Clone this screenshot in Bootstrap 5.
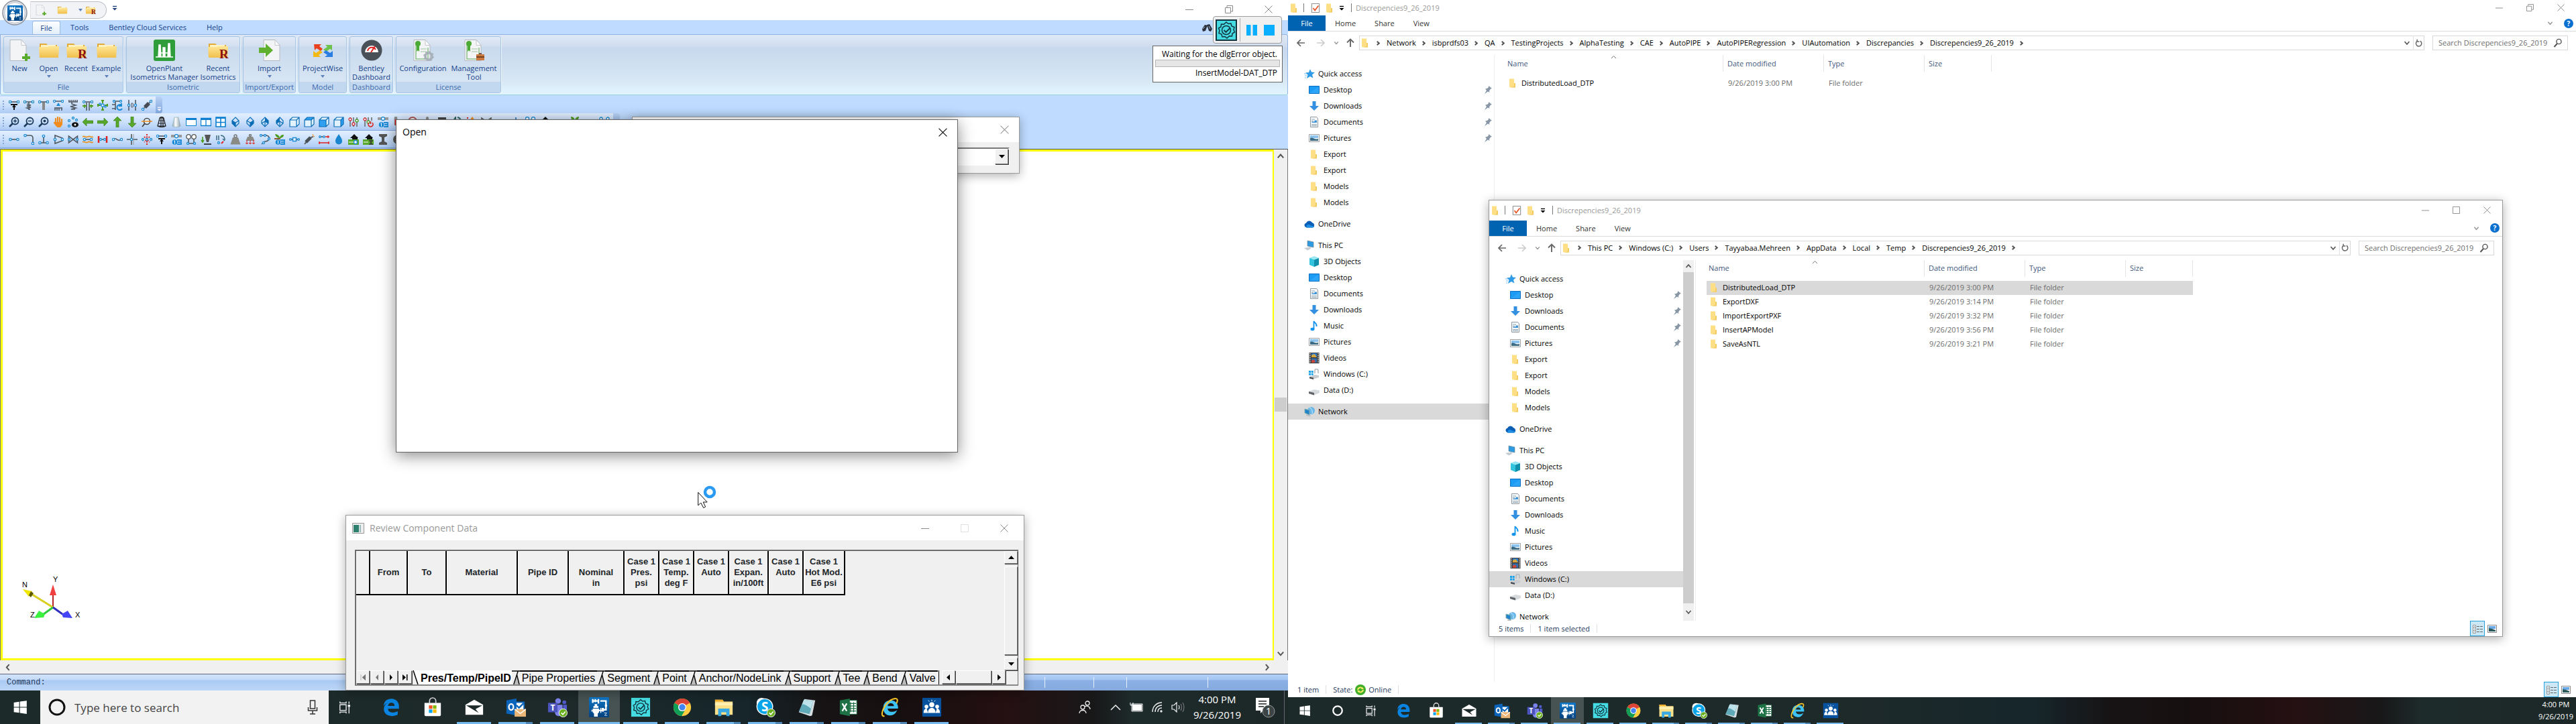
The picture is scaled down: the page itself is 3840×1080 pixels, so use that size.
<!DOCTYPE html>
<html lang="en">
<head>
<meta charset="utf-8">
<meta name="viewport" content="width=device-width, initial-scale=1">
<title>AutoPIPE</title>
<link href="https://cdn.jsdelivr.net/npm/bootstrap@5.3.0/dist/css/bootstrap.min.css" rel="stylesheet">
<style>
body{font-family:"Open Sans","Noto Sans",sans-serif;font-size:11px;line-height:16px;color:#000;background:#fff;overflow:hidden}
button{background:none;border:0;padding:0;color:inherit;font:inherit}
a{color:inherit;text-decoration:none}
svg{display:block;flex:none}
.desk{height:100vh}
.monitor{flex:1 1 0;min-width:0}
.i16{width:16px;height:16px}
.i32{width:32px;height:32px}
.nd{fill:#fff;stroke:#1a8ad6;stroke-width:1.3}
.gl{fill:none;stroke:#505860;stroke-width:1.6}
.bl{fill:none;stroke:#0a6db5;stroke-width:1.2}

/* AutoPIPE main window */
.app-title{height:30px;background:#fff}
.orb{left:3px;top:0;z-index:3}
.quick{width:114px;height:26px;margin-left:45px;margin-top:2px;padding-left:7px;border:1px solid #b9bec7;border-left-color:#dde0e6;border-radius:0 13px 13px 0;background:#f1f3f7}
.wbtn{width:59px;height:28px;color:#8a8a8a}
.tabstrip{height:21px;background:#bfdbff;padding-left:48px;color:#15428b}
.tabstrip a{height:21px;line-height:22px;padding:0 15px}
.tabstrip a.on{width:42px;padding:0;text-align:center;margin-top:1px;height:20px;line-height:20px;background:linear-gradient(#fdfeff,#e3eefa);border:1px solid #9cbce6;border-bottom:0;border-radius:3px 3px 0 0}
.tabstrip .find-cmd{margin-right:113px}
.ribbon{height:91px;padding:2px 4px 0;gap:4px;border:1px solid #8db2e3;border-bottom-color:#9ad3dd;border-radius:0 3px 3px 3px;background:linear-gradient(#dfe8f5,#cfdcee 18px,#c7d8ee 19px,#d6e6f3 65px,#e2f5ff)}
.rgroup{height:85px;border:1px solid #a5c3e2;border-radius:3px;box-shadow:1px 1px 0 #eef6fd;background:linear-gradient(#e1eaf6,#d3dfef 14px,#c9daee 15px,#dce9f5)}
.rgroup .rlabel{height:16px;line-height:16px;background:#c1d8f0;color:#3e6aaa;text-align:center;border-radius:0 0 3px 3px}
.rbtn{color:#15428b;line-height:13px;padding-top:4px;display:flex;flex-direction:column;align-items:center}
.rbtn svg.i32{margin-bottom:4px}
.w41{width:41px}.w46{width:46px}.w49{width:49px}.w56{width:56px}.w65{width:65px}.w72{width:72px}.w76{width:76px}.w79{width:79px}.w104{width:104px}.w157{width:157px}
.tools{height:80px;background:#bfdbff}
.tbar{width:max-content;height:26px;padding-left:10px;background:linear-gradient(#e3efff,#c9dffb 55%,#aecbf4);border-bottom:1px solid #7fa6dd;border-radius:0 4px 4px 0;position:relative}
.tbar.first{margin-top:2px;height:25px;border-bottom:0}
.tbar::before{content:"";position:absolute;left:4px;top:6px;bottom:5px;border-left:2px dotted #86a7d6}
.tbar button{width:22px;height:25px;display:flex;align-items:center;justify-content:center}
.tbar button svg{width:16px;height:16px}
.tbar .more{width:10px;background:linear-gradient(#b9d2f6,#7fa5dc);color:#fff;border-radius:0 4px 4px 0;margin-left:2px;align-items:flex-end;padding-bottom:3px}
.tbar .more svg{width:7px;height:7px}
.view{border-top:1px solid #555;border-left:1px solid #777}
.draw{border:3px solid #ff0;border-right-width:2px;background:#fff}
.sbar{width:21px;background:#f0f0f0;border-right:1px solid #777}
.thumb{width:18px;height:21px;background:#cdcdcd;margin-top:354px}
.hbar{height:21px;background:#f0f0f0;border-bottom:1px solid #5c6a80;padding:0 26px 0 6px}
.status{height:24px;padding-left:10px;background:linear-gradient(#d3e4fb,#c2d9f8 35%,#a9c9f3 36%,#bdd6f7);font-family:"Liberation Mono",monospace;font-size:12px;color:#1e395b}
.stat-r{width:450px;background:linear-gradient(#b4d0f7,#a2c3f2 35%,#8bb0e6 36%,#86aadd)}
.stat-r i{height:16px;border-right:1px solid #e6f0fc}

/* floating windows */
.win{position:absolute;background:#fff;border:1px solid #9a9a9a;box-shadow:0 3px 14px rgba(0,0,0,.32)}
.win-open{left:590px;top:178px;width:838px;height:497px;z-index:5;border-color:#666;box-shadow:0 5px 22px rgba(0,0,0,.45)}
.win-open header{height:36px;padding:0 15px 0 9px;font-size:14px}
.win-combo{left:942px;top:174px;width:578px;height:85px;z-index:4;background:#f0f0f0}
.win-combo header{height:37px;background:#fff;padding-right:15px;color:#999}
.combo{height:27px;margin:8px 14px 0 20px;border:2px solid;border-color:#777 #fff #fff #777;background:#fff}
.combo select{appearance:none;border:0;background:#fff;outline:0}
.raised{background:#f0f0f0;border:1px solid;border-color:#fff #777 #777 #fff;box-shadow:1px 1px 0 #444;display:flex;align-items:center;justify-content:center}
.combo .raised{width:20px}
.win-review{left:515px;top:768px;width:1012px;height:262px;z-index:4;background:#f0f0f0}
.win-review header{height:37px;background:#fff;padding-left:9px;font-size:14px;color:#999}
.wbtn:disabled{color:#e0e0e0}
.sheet{margin:14px 8px 0 13px;height:203px;border:2px solid #6d6d6d;border-right-width:1px;border-bottom-color:#888}
.grid{table-layout:fixed;width:729px!important;border-collapse:separate;border-spacing:0}
.grid th{font:bold 13px/16px "Liberation Sans",sans-serif;height:66px;text-align:center;vertical-align:top;padding:8px 0 0;border:1px solid #000;border-width:0 2px 2px 0;box-shadow:inset 1px 1px 0 #fff;background:#f0f0f0;white-space:nowrap}
.c21{width:21px}.c52{width:52px}.c56{width:56px}.c58{width:58px}.c59{width:59px}.c62{width:62px}.c76{width:76px}.c83{width:83px}.c106{width:106px}
.vs{width:20px}
.h19{height:19px}
.sheettabs{height:21px;font:16px/20px "Liberation Sans",sans-serif}
.sheettabs .raised{width:20px;height:20px;margin-right:1px;flex:none}
.sheettabs .raised.long{width:53px}
.sheettabs .tabs{width:785px;flex:none;overflow:hidden;border-right:1px solid #000}
.sheettabs .tabs button{border-top:2px solid #000;height:21px;line-height:18px;white-space:nowrap;padding:0 3px}
.sheettabs .tabs button.on{background:#fff;border-top-color:#fff;font-weight:bold;padding:0 1px 0 0}
.sheettabs .tabs svg{width:12px;height:21px}

/* test run indicator */
.runner{left:1808px;top:24px;width:103px;height:41px;z-index:6;background:#f0f0f0;border:1px solid #9d9d9d;border-radius:4px;padding:3px}
.runner .sep{width:1px;height:35px;background:#aaa;margin:0 9px 0 4px}
.bubble{left:1718px;top:68px;width:194px;height:55px;z-index:6;background:#fff;border:1px solid #666;padding:4px 3px;font-size:12px}
.bubble p{margin:0 4px;text-align:right;line-height:16px;white-space:nowrap}
.bubble .bar{height:11px;border:1px solid #b5b5b5;background:#e6e6e6;margin-bottom:1px}

/* Explorer */
.explorer{background:#fff}
.ex-title{height:23px;padding-left:1px;color:#999;gap:6px}
.ex-title .vr1{width:1px;height:13px;background:#777}
.ex-title button{width:46px;height:20px;display:flex;align-items:center;justify-content:center;color:#888}
.ex-tabs{height:24px;border-bottom:1px solid #dadbdc;color:#333}
.ex-tabs a{line-height:23px;height:23px;padding:0 14px}
.ex-tabs a.file{background:#0063b1;color:#fff;width:56px;padding:0;text-align:center}
.ex-addr{height:35px;padding:6px 12px 7px 4px}
.ex-addr .crumbs{border:1px solid #d9d9d9;height:22px;margin-right:12px;min-width:0}
.ex-addr .crumbs a{white-space:nowrap}
.chev{width:24px;display:flex;justify-content:center}
.chev::before{content:"";width:5px;height:5px;border:solid #555;border-width:2px 2px 0 0;transform:rotate(45deg);margin-right:3px}
.ex-addr .find{width:202px;height:22px;border:1px solid #d9d9d9;padding:0 7px 0 8px}
.find input{border:0;outline:0;padding:0;width:170px;min-width:0;color:#6d6d6d;background:none}
.find input::placeholder{color:#6d6d6d;opacity:1}
.navb{width:30px;height:22px;display:flex;align-items:center;justify-content:center;color:#666}
.navb.off{color:#ccc}
.navb.sm{width:16px;color:#888}
.navb.upb{width:26px}
.tree{width:308px;border-right:1px solid #eee}
.tree .rows{padding-top:16px;overflow:hidden}
.tree a{display:flex;align-items:center;height:24px;padding:0 2px 0 31px;gap:6px;flex:none}
.tree a.top{padding-left:24px;gap:5px}
.tree a.gap{margin-top:8px}
.tree a.sel{background:#d9d9d9}
.tree a svg.pin{margin-left:auto;width:14px;height:14px}
.tree .scroll{width:16px;background:#f0f0f0;margin-right:2px}
.tree .scroll i{background:#cdcdcd}
.files{table-layout:fixed;width:725px!important;margin-left:16px;border-collapse:separate;border-spacing:0}
.c325{width:325px}.c150{width:150px}.c100{width:100px}
.files th{height:25px;padding:0 0 0 6px;font-weight:400;color:#43597d;border-right:1px solid #e5e5e5!important;vertical-align:middle;position:relative}
.files th:first-child{padding-left:3px}
.files td{height:21px;padding:0 0 0 7px;color:#6d6d6d;vertical-align:middle;background:none}
.files td:first-child{padding-left:3px;color:#000}
.files td svg{margin-right:5px}
.files tbody::before{content:"";display:block;height:6px}
.files tr.sel td{background:#d9d9d9}
.files .sort{position:absolute;left:157px;top:0}
.ex-status{height:23px;padding-left:14px;color:#1e395b}
.ex-status .vr1{width:1px;height:13px;background:#e0e0e0;margin:0 10px}
.vbtn{width:22px;height:23px;display:flex;align-items:center;justify-content:center}
.vbtn.on{border:1px solid #26a0da;background:#cce8f6}
.win-ex{left:299px;top:298px;width:1512px;height:652px;z-index:3}
.win-ex .ex-title{height:30px}

/* task bars */
.task{background:linear-gradient(90deg,#1c2a2a 0,#1e2a2a 44%,#16262b 58%,#171314 64%,#160f10 70%,#251012 78%,#181819 85%,#1e2b2b 88%,#1c2827);color:#fff}
.task.big{height:50px}
.task.small2{height:40px}
.task .t{width:62px;height:100%;display:flex;align-items:center;justify-content:center;position:relative}
.task .t.start{width:60px}
.task.small2 .t{width:49px}
.task .t svg{width:30px;height:30px}
.task .t svg.tview{width:27px;margin-right:16px}
.task.small2 .t svg{width:24px;height:24px}
.task .t.run::after{content:"";position:absolute;bottom:0;left:5px;right:6px;height:3px;background:#76b9ed}
.task.small2 .t.run::after{height:2px;left:4px;right:5px}
.task .t.multi::after{background:linear-gradient(90deg,#76b9ed 80%,#4f86b4 80%)}
.task .t.act{background:#465352}
.task .t.act::after{left:0;right:0}
.search{width:430px;background:#f2f2f2;color:#444;padding:0 16px 0 12px;gap:13px}
.search input{border:0;outline:0;background:none;font-size:17px;padding:0;color:#444}
.search input::placeholder{color:#444;opacity:1}
.tray{gap:13px}
.peek{width:6px;height:50px;border-left:1px solid #667}
.clock{text-align:center;font-size:15px;line-height:23px}
.task.small2 .clock{font-size:11px;line-height:18px}
.pointer{left:1040px;top:724px;z-index:6;pointer-events:none}
</style>
</head>
<body>
<svg width="0" height="0" class="position-absolute" aria-hidden="true">
<defs>
<linearGradient id="gFold" x1="0" y1="0" x2="0" y2="1"><stop offset="0" stop-color="#ffe695"/><stop offset="1" stop-color="#f0bf4c"/></linearGradient>
<linearGradient id="gBlue" x1="0" y1="0" x2="0" y2="1"><stop offset="0" stop-color="#0f76c6"/><stop offset="1" stop-color="#02407c"/></linearGradient>
<linearGradient id="gCone" x1="0" x2="1"><stop offset="0" stop-color="#8fa3b0"/><stop offset=".4" stop-color="#fff"/><stop offset="1" stop-color="#8a9daa"/></linearGradient>
<symbol id="x" viewBox="0 0 12 12"><path d="M.5.5l11 11M11.500.5l-11 11" stroke="currentColor" fill="none"/></symbol>
<symbol id="mn" viewBox="0 0 12 12"><path d="M0 6.500h12" stroke="currentColor"/></symbol>
<symbol id="rs" viewBox="0 0 12 12"><path d="M.5 3.500h8v8h-8zM3 3V.5h8.500v8.500H9" stroke="currentColor" fill="none"/></symbol>
<symbol id="mx" viewBox="0 0 12 12"><path d="M.5.5h11v11H.5z" stroke="currentColor" fill="none"/></symbol>
<symbol id="up" viewBox="0 0 10 10"><path d="M1.500 7L5 3l3.500 4" stroke="#555" stroke-width="1.800" fill="none"/></symbol>
<symbol id="dn" viewBox="0 0 10 10"><path d="M1.500 3L5 7l3.500-4" stroke="currentColor" stroke-width="1.600" fill="none"/></symbol>
<symbol id="lf" viewBox="0 0 10 10"><path d="M7 1L3.500 5 7 9" stroke="#555" stroke-width="1.800" fill="none"/></symbol>
<symbol id="rt" viewBox="0 0 10 10"><path d="M3.500 1L7 5 3.500 9" stroke="#555" stroke-width="1.800" fill="none"/></symbol>
<symbol id="car" viewBox="0 0 6 4"><path d="M0 0h6L3 4z" fill="#5b7fb8"/></symbol>
<symbol id="sl" viewBox="0 0 13 21" preserveAspectRatio="none"><path d="M8 6l4 15H4z" fill="#bbb"/><path d="M0 1h13M10 1L3 21M8 6l4 15" fill="none" stroke="#000" stroke-width="1.500"/></symbol>
<symbol id="f" viewBox="0 0 16 16"><path d="M3 1.500h7V8h2v6.500H5L3 14z" fill="#ffdf86"/><path d="M10 8h2v6.500H5l5-1.500z" fill="#f4ca63"/></symbol>
<symbol id="fold" viewBox="0 0 32 32"><path d="M2 6h10l2 2h14v6H2z" fill="#e2ab38"/><path d="M4 8h22v6H4z" fill="#fff3c4"/><path d="M1 11h13l2-1h15v3l-1 14H2z" fill="url(#gFold)"/></symbol>
<symbol id="foldR" viewBox="0 0 32 32"><use href="#fold"/><text x="18" y="28" font-family="Liberation Serif,serif" font-weight="bold" font-size="19" fill="#8b1010">R</text></symbol>
<symbol id="page" viewBox="0 0 32 32"><path d="M2 .5h17l7 8v23H2z" fill="#f3f4f6" stroke="#b4b9c0"/><path d="M19 .5v8h7z" fill="#fff" stroke="#c2c6cc"/></symbol>
<symbol id="lic" viewBox="0 0 32 32"><use href="#page"/><path d="M5 4v25h18V12" stroke="#8cc08a" fill="none" stroke-width="1.500"/><circle cx="8" cy="6" r="4" fill="#4bab35"/><path d="M6 8h4v10l-2-2-2 2z" fill="#4bab35"/><path d="M12 14h9M12 18h9" stroke="#9fc79f"/></symbol>
<symbol id="new" viewBox="0 0 32 32"><use href="#page"/><path d="M24 21h4v4h4v4h-4v3h-4v-3h-4v-4h4z" fill="#58ab2b"/></symbol>
<symbol id="star" viewBox="0 0 16 16"><path d="M9 1l2 4.500 5 .5-4 3.500 1.500 5L9 12l-5 3 1.500-5.500L2 6.500 7 6z" fill="#2f9ae5"/><path d="M0 8h4M1 11h3M1 14h2" stroke="#7cc2f2"/></symbol>
<symbol id="desk" viewBox="0 0 16 16"><path d="M.5 2.500h15v11H.5z" fill="#1b9bf3" stroke="#0a6fc2"/><path d="M1 13L15 3v10z" fill="#3db0ff" opacity=".5"/></symbol>
<symbol id="down" viewBox="0 0 16 16"><path d="M5.500 1h5v7H15l-7 7-7-7h4.500z" fill="#3490e0"/></symbol>
<symbol id="doc" viewBox="0 0 16 16"><path d="M2.500.5h9l2 2.500v12.500h-11z" fill="#f8fafb" stroke="#8f989f"/><path d="M4 4h5M4 6.500h3M4 11.500h8M4 13.500h8" stroke="#8ca2b2"/><path d="M8.500 5.500H12V9H4.500V7.500h4z" fill="#3c93d8"/></symbol>
<symbol id="pic" viewBox="0 0 16 16"><path d="M.5 2.500h15v11H.5z" fill="#fff" stroke="#9aa0a6"/><path d="M2 4h12v4H2z" fill="#8cc3ee"/><path d="M2 8c4-2 7 3 12 1v3H2z" fill="#3c6c84"/></symbol>
<symbol id="cloud" viewBox="0 0 16 16"><path d="M3.500 13.500a3.500 3.500 0 0 1-.5-6.800A5 5 0 0 1 12 6a4 4 0 0 1 1 7.500z" fill="#0a5fb4"/><path d="M4 13.500c-2-3 2-6 5-3.500l6 2c-1 1.500-1.500 1.500-3 1.500z" fill="#1f8fe6"/></symbol>
<symbol id="pc" viewBox="0 0 16 16"><path d="M5 1l9 2v8L5 9z" fill="#2e9ae0" stroke="#6d7d88" stroke-width=".6"/><path d="M8 10l3 1-2 2-4-1zM0 12l5-1 5 2-5 2.500z" fill="#c5ccd2"/></symbol>
<symbol id="cube3" viewBox="0 0 16 16"><path d="M1 3l7-2.500L15 3v10l-7 3-7-3z" fill="#33c3dc"/><path d="M8 5.500L15 3v10l-7 3z" fill="#128fac"/><path d="M1 3l7-2.500L15 3 8 5.500z" fill="#9be8f2"/></symbol>
<symbol id="mus" viewBox="0 0 16 16"><ellipse cx="5.500" cy="13" rx="3" ry="2.300" fill="#1193ee"/><path d="M7.500 13V1c1 3 5 3.500 4 8" stroke="#1193ee" stroke-width="1.800" fill="none"/></symbol>
<symbol id="vid" viewBox="0 0 16 16"><path d="M.5 0h15v16H.5z" fill="#3a3a3a"/><path d="M4 1h8v6H4z" fill="#2f7fd0"/><path d="M4 8.500h8v6.500H4z" fill="#336fae"/><path d="M4 4l4-2 2 2 2 3H4z" fill="#d8a53a"/><path d="M4 12l3-2 3 3-2 2H4z" fill="#c8463a"/><path d="M2 1v14M14 1v14" stroke="#fff" stroke-dasharray="1.500 1.500" stroke-width="1.300"/></symbol>
<symbol id="drvw" viewBox="0 0 16 16"><path d="M0 3h3v3H0zM3.700 3h3v3h-3zM0 6.700h3v3H0zM3.700 6.700h3v3h-3z" fill="#1ba1e8"/><path d="M9 7V3a2.500 2.500 0 0 1 5 0v4" fill="none" stroke="#b3bac0" stroke-width="1.600"/><path d="M1 12l8-3 6 1v3l-8 2.500-6-1.500z" fill="#c9cdd1"/><path d="M1 12l6 1.500V16l-6-1.500z" fill="#4b4f52"/></symbol>
<symbol id="drv" viewBox="0 0 16 16"><path d="M0 10l8-3 8 1.500V12l-8 3.500L0 13z" fill="#d7dadd"/><path d="M0 10l8 2v3.500L0 13z" fill="#606468"/></symbol>
<symbol id="net" viewBox="0 0 16 16"><circle cx="10.500" cy="6.500" r="5.500" fill="#68b7e8"/><path d="M8 2c3 1 5 5 4 9" stroke="#d7f0ff" fill="none"/><path d="M1 4l7 2v7L1 10z" fill="#1f86cc" stroke="#8aa"/><path d="M4 12l6 2-1 1.500-6-1.500z" fill="#b5bcc2"/></symbol>
<symbol id="pin" viewBox="0 0 14 14"><path d="M8 1l5 4-2 .5-2 3 .5 2.500L7 9.500 2 13l3-5L3 5.500l3-.5 2-2z" fill="#8796a5"/></symbol>
<symbol id="chk" viewBox="0 0 16 16"><path d="M1.500.5h13v15h-13z" fill="#fff" stroke="#777"/><path d="M4 8l3 4 6-8" stroke="#e8572a" stroke-width="2" fill="none"/></symbol>
<symbol id="qd" viewBox="0 0 8 8"><path d="M1 1.500h6" stroke="currentColor" stroke-width="1.400"/><path d="M.5 4h7L4 7.500z" fill="currentColor"/></symbol>
<symbol id="al" viewBox="0 0 14 14"><path d="M7 2L2 7l5 5M2 7h11" stroke="currentColor" stroke-width="1.700" fill="none"/></symbol>
<symbol id="au" viewBox="0 0 14 14"><path d="M2 6.500L7 1.500l5 5M7 2v11" stroke="#666" stroke-width="1.900" fill="none"/></symbol>
<symbol id="ar" viewBox="0 0 14 14"><path d="M7 2l5 5-5 5M12 7H1" stroke="currentColor" stroke-width="1.700" fill="none"/></symbol>
<symbol id="rf" viewBox="0 0 14 14"><path d="M9.500 3.500a4.500 4.500 0 1 1-5 .2M4.500.8v3.400h3.500" stroke="#666" stroke-width="1.600" fill="none"/></symbol>
<symbol id="mg" viewBox="0 0 14 14"><circle cx="8.500" cy="5" r="3.600" stroke="#555" stroke-width="1.400" fill="none"/><path d="M6 8l-4.500 5" stroke="#555" stroke-width="2"/></symbol>
<symbol id="hp" viewBox="0 0 14 14"><circle cx="7" cy="7" r="7" fill="#0a70cf"/><text x="7" y="10.500" font-size="10" font-weight="bold" text-anchor="middle" fill="#fff">?</text></symbol>
<symbol id="dets" viewBox="0 0 16 16"><path d="M1.500 2.500h4v4h-4zM1.500 6.500h4v4h-4zM1.500 10.500h4v4h-4z" fill="#fff" stroke="#999"/><path d="M3 4.500h1M3 8.500h1M3 12.500h1" stroke="#2b7bd0"/><path d="M7 4.500h4M12 4.500h4M7 8.500h4M12 8.500h4M7 12.500h4M12 12.500h4" stroke="#666"/></symbol>
<symbol id="bigs" viewBox="0 0 14 14"><path d="M.5 1.500h13v11H.5z" fill="#fff" stroke="#888"/><path d="M2 3h10v4H2z" fill="#6aa8e8"/><path d="M2 6l5 1 5 2v2H2z" fill="#2c5a5c"/></symbol>
<!-- pipe tool icons used more than once -->
<symbol id="anc" viewBox="0 0 16 16"><path class="gl" d="M2 3h12"/><circle class="nd" cx="2" cy="3" r="1.700"/><circle class="nd" cx="14" cy="3" r="1.700"/><path d="M3 7h10M8 8v7" stroke="#111" stroke-width="2"/><path d="M8 7l3 4H5z" fill="#111"/></symbol>
<symbol id="pid" viewBox="0 0 16 16"><path d="M0 3h16" stroke="#999" stroke-width="4"/><circle class="nd" cx="8" cy="3" r="2.500"/><circle cx="5.500" cy="12" r="3.800" fill="#1a8ad6"/><path d="M5.500 9.500v5M4.500 10.500h1" stroke="#fff"/><path d="M9 9h6v6H9M10 12h4" stroke="#1a8ad6" stroke-width="1.800" fill="none"/></symbol>
<symbol id="lens" viewBox="0 0 16 16"><circle cx="9.500" cy="6.500" r="5" fill="none" stroke="#1c3a5c" stroke-width="1.800"/><path d="M6 10l-5 5" stroke="#1c3a5c" stroke-width="2.500"/></symbol>
<symbol id="arr" viewBox="0 0 16 16"><path d="M16 8l-6-6v4H0v4h10v4z" fill="#57a82b" stroke="#3c7f17" stroke-width=".7"/></symbol>
<symbol id="cub" viewBox="0 0 16 16"><path class="bl" d="M1 5l4-4h10v10l-4 4H1zM1 5h10v10M11 5l4-4"/></symbol>
<!-- task bar -->
<symbol id="win" viewBox="0 0 32 32"><path d="M6 8.500l8.500-1.200v8.200H6zM15.700 7l10.800-1.500v10H15.700zM6 16.600h8.500v8.200L6 23.600zM15.700 16.600h10.800v10L15.700 25z" fill="#fff"/></symbol>
<symbol id="tv" viewBox="0 0 32 32"><path d="M8 11.500h11v10H8zM8 6v2.500h11V6M8 27v-2.500h11V27M24 6v4M24 16v11" stroke="#eee" stroke-width="1.600" fill="none"/><path d="M22 11.500h4v4h-4z" fill="#fff"/></symbol>
<symbol id="edge" viewBox="0 0 32 32"><path d="M4 14C5 6 10 2.500 16.500 2.500 24 2.500 28.500 8 28.500 15v3.500H11c.3 4 3.500 6 7.500 6 3 0 5.500-.8 8-2.300v5.600c-3 1.600-6 2.200-9 2.200C9.500 30 4.500 25.500 4.500 19c0-5 3-9 7-10.500-3 .8-6 3-7.500 5.500zm7-.2h10.500c0-3-1.800-5-5-5-3 0-5 2-5.500 5z" fill="#0a84e0"/></symbol>
<symbol id="store" viewBox="0 0 32 32"><path d="M3 9h26v19a2 2 0 0 1-2 2H5a2 2 0 0 1-2-2z" fill="#fff"/><path d="M11 11V6a5 5 0 0 1 10 0v5" stroke="#ddd" stroke-width="1.700" fill="none"/><path d="M10 13h5.500v5.500H10z" fill="#f25022"/><path d="M16.500 13H22v5.500h-5.500z" fill="#7fba00"/><path d="M10 19.500h5.500V25H10z" fill="#00a4ef"/><path d="M16.500 19.500H22V25h-5.500z" fill="#ffb900"/></symbol>
<symbol id="mail" viewBox="0 0 32 32"><path d="M2 12L16 4l14 8v16H2z" fill="#fff"/><path d="M3 13h26l-11 6 5 6z" fill="#1e2a2a"/></symbol>
<symbol id="outl" viewBox="0 0 32 32"><path d="M15 8h14v15H15z" fill="#fff" stroke="#0a64ba" stroke-width="2"/><path d="M17 13l4 4 8-8" stroke="#0a64ba" stroke-width="2.500" fill="none"/><path d="M1 5l16-3v27L1 26z" fill="#0a64ba"/><ellipse cx="8.500" cy="15.500" rx="3.600" ry="4.800" fill="none" stroke="#fff" stroke-width="2.400"/><path d="M14 19h18v12H14z" fill="#eab676"/><path d="M14 19l9 7 9-7" stroke="#fff" stroke-width="1.500" fill="none"/></symbol>
<symbol id="teams" viewBox="0 0 32 32"><circle cx="17" cy="6" r="4.500" fill="#7b83eb"/><circle cx="27" cy="8" r="3" fill="#5059c9"/><path d="M12 12h12v11a6 6 0 0 1-12 2z" fill="#7b83eb"/><path d="M25 12h6v8a4 4 0 0 1-6 2z" fill="#5059c9"/><path d="M1 9h15v15H1z" fill="#4b53bc"/><text x="8.500" y="21" font-size="13" font-weight="bold" text-anchor="middle" fill="#fff">T</text><circle cx="25" cy="25" r="6.500" fill="#6bb020" stroke="#fff"/><path d="M22 25l2.500 2.500L28.500 23" stroke="#fff" stroke-width="1.700" fill="none"/></symbol>
<symbol id="ap" viewBox="0 0 32 32"><rect width="32" height="32" rx="2" fill="url(#gBlue)"/><path d="M6 3v6M6 6h9M10 3v5M15 3v7M18 6h9v14h-6" stroke="#fff" stroke-width="2.500" fill="none"/><path d="M27 12v3M22 17v6" stroke="#fff" stroke-width="3.500"/><path d="M9 11h4v3h2v3H7v-3h2zM6 18h10v6l-2 2v5H8v-5l-2-2z" fill="#fff"/><path d="M4 20h2v3H4zM16 20h6v2h-6zM18 17h1.500v8H18z" fill="#fff"/><path d="M24 25h4l-3 4h4" stroke="#cde" fill="none"/></symbol>
<symbol id="tc" viewBox="0 0 32 32"><path d="M1 1h30v30H1z" fill="#45dbe2"/><path d="M16 4l3 2.500 4-.5 1 4 4 1.500-1 4 1.500 3.500-3.500 2-.5 4-4-.3L17 28l-3-2.500-4 .5-1-4-4-1.500 1-4L4.500 13 8 11l.5-4 4 .3z" fill="none" stroke="#12343f" stroke-width="1.500"/><circle cx="16" cy="16" r="6.500" fill="none" stroke="#12343f" stroke-width="1.500"/><path d="M12.500 16l3 3 6-6" stroke="#12343f" stroke-width="1.800" fill="none"/></symbol>
<symbol id="chr" viewBox="0 0 32 32"><circle cx="16" cy="16" r="14" fill="#ffcd40"/><path d="M16 16L3.900 9A14 14 0 0 1 28.100 9z" fill="#db4437"/><path d="M3.900 9A14 14 0 0 0 15 30l6-10.500-5-3z" fill="#0f9d58"/><circle cx="16" cy="16" r="6.500" fill="#fff"/><circle cx="16" cy="16" r="5" fill="#4285f4"/></symbol>
<symbol id="exp" viewBox="0 0 32 32"><path d="M2 4h12l2 3h14v21H2z" fill="#fbe08a"/><path d="M2 4h12l2 3H2z" fill="#f2ad2a"/><path d="M2 9h28v4H2z" fill="#fff0b4"/><path d="M7 18h18v12h-5v-6h-8v6H7z" fill="#39a9e4"/></symbol>
<symbol id="sky" viewBox="0 0 32 32"><circle cx="10" cy="9" r="8" fill="#fff"/><circle cx="15" cy="15" r="12.500" fill="#0aa4e8" stroke="#fff" stroke-width="1.500"/><text x="15" y="22" font-size="20" font-weight="bold" text-anchor="middle" fill="#fff">S</text><circle cx="25" cy="25" r="6.500" fill="#6bb020" stroke="#fff"/><path d="M22 25l2.500 2.500L28.500 23" stroke="#fff" stroke-width="1.700" fill="none"/></symbol>
<symbol id="note" viewBox="0 0 32 32"><path d="M12 3l17 2-5 24-3 1L3 24z" fill="#d4dde0"/><path d="M11 4l15 2-6 21L3 23z" fill="#5fa9b8"/><path d="M11 4l15 2-4 12C14 12 10 10 8 12z" fill="#bfe3ea"/></symbol>
<symbol id="xls" viewBox="0 0 32 32"><path d="M15 5h14v22H15z" fill="#fff" stroke="#1e7145"/><path d="M19 8v16M24 8v16M17 10h11M17 14h11M17 18h11M17 22h11" stroke="#1e7145" stroke-width="1.400"/><path d="M2 5l16-3v28L2 27z" fill="#1e7145"/><path d="M6 10l7 12M13 10L6 22" stroke="#fff" stroke-width="2.400"/></symbol>
<symbol id="ie" viewBox="0 0 32 32"><path d="M5 17C5 9 10 5 17 5c8 0 12 6 11.500 13H12c.5 6 9 7 15 2.500C25 26 21 29 16 29 9 29 5 24 5 17zm7-3h10c-.5-6-9.500-6-10 0z" fill="#3ec1f3"/><path d="M26 10c6-12-8-9-16 1S1 32 7 30" stroke="#f6c52a" stroke-width="2.200" fill="none"/></symbol>
<symbol id="ppl" viewBox="0 0 32 32"><rect x="1" y="1" width="30" height="30" rx="1" fill="#06529e"/><circle cx="16" cy="12" r="4" fill="#fff"/><circle cx="7.500" cy="15" r="3" fill="#fff"/><circle cx="24.500" cy="15" r="3" fill="#fff"/><path d="M10 25c0-6 3-8 6-8s6 2 6 8zM3 25c0-5 2-7 5-7l2 7zM29 25c0-5-2-7-5-7l-2 7z" fill="#fff"/><path d="M16 6.500V4M12 7l-1.500-2M20 7l1.500-2" stroke="#fff"/></symbol>
</defs>
</svg>

<div class="desk d-flex">

<!-- left monitor -->
<div class="monitor d-flex flex-column position-relative">
 <main class="d-flex flex-column flex-grow-1">
  <button class="orb position-absolute" aria-label="Application menu"><svg width="38" height="38" viewBox="0 0 38 38"><circle cx="19" cy="19" r="18" fill="#e4e7ec" stroke="#8e949e" stroke-width="1.500"/><circle cx="19" cy="19" r="15.500" fill="#f6f7f9" stroke="#b8bec8"/><use href="#ap" x="8" y="8" width="23" height="23"/></svg></button>
  <div class="app-title d-flex align-items-start">
   <div class="quick d-flex align-items-center">
    <button aria-label="New"><svg class="i16"><use href="#new"/></svg></button>
    <button class="ms-3" aria-label="Open"><svg class="i16"><use href="#fold"/></svg></button>
    <button class="ms-3" aria-label="Open list"><svg width="6" height="4"><use href="#car"/></svg></button>
    <button class="ms-1" aria-label="Recent"><svg class="i16"><use href="#foldR"/></svg></button>
   </div>
   <button class="ms-2 mt-2" aria-label="Customize"><svg width="8" height="8" color="#23457f"><use href="#qd"/></svg></button>
   <div class="d-flex ms-auto">
    <button class="wbtn" aria-label="Minimize"><svg class="mx-auto" width="12" height="12"><use href="#mn"/></svg></button>
    <button class="wbtn" aria-label="Restore"><svg class="mx-auto" width="12" height="12"><use href="#rs"/></svg></button>
    <button class="wbtn" aria-label="Close"><svg class="mx-auto" width="12" height="12"><use href="#x"/></svg></button>
   </div>
  </div>
  <nav class="tabstrip d-flex">
   <a href="#" class="on">File</a><a href="#">Tools</a><a href="#">Bentley Cloud Services</a><a href="#">Help</a>
   <svg class="i16 ms-auto mt-1 find-cmd" viewBox="0 0 16 16"><path d="M1 9l4-6 4 1-3 8-4 1zM8 3l4-1 4 7-2 4-3-1z" fill="#2b303a"/><path d="M2 9l3-3M11 5l2 4" stroke="#9fb7d8"/></svg>
  </nav>
  <section class="ribbon d-flex">
   <div class="rgroup d-flex flex-column"><div class="d-flex flex-grow-1">
     <button class="rbtn w46"><svg class="i32"><use href="#new"/></svg>New</button>
     <button class="rbtn w41"><svg class="i32"><use href="#fold"/></svg>Open<svg class="mt-1" width="6" height="4"><use href="#car"/></svg></button>
     <button class="rbtn w41"><svg class="i32"><use href="#foldR"/></svg>Recent</button>
     <button class="rbtn w49"><svg class="i32"><use href="#fold"/></svg>Example<svg class="mt-1" width="6" height="4"><use href="#car"/></svg></button>
    </div><div class="rlabel">File</div></div>
   <div class="rgroup d-flex flex-column"><div class="d-flex flex-grow-1 px-1">
     <button class="rbtn w104"><svg class="i32" viewBox="0 0 32 32"><rect width="32" height="32" rx="3" fill="#2f9e3a"/><path d="M3 26h26M7 26L8 8h2l1 18zM14 26V12h3v14zM21 26l1-20h2l1 20zM10 20h15" stroke="#fff" stroke-width="1.400" fill="#fff"/></svg>OpenPlant<span>Isometrics Manager</span></button>
     <button class="rbtn w56"><svg class="i32"><use href="#foldR"/></svg>Recent<span>Isometrics</span></button>
    </div><div class="rlabel">Isometric</div></div>
   <div class="rgroup d-flex flex-column w79"><button class="rbtn flex-grow-1"><svg class="i32" viewBox="0 0 32 32"><use href="#page" x="5" width="32" height="32"/><path d="M0 12h10V6l11 10-11 10v-6H0z" fill="#5fb02f"/></svg>Import<svg class="mt-1" width="6" height="4"><use href="#car"/></svg></button><div class="rlabel">Import/Export</div></div>
   <div class="rgroup d-flex flex-column w72"><button class="rbtn flex-grow-1"><svg class="i32" viewBox="0 0 32 32"><path d="M3 7h11l-3 3 5 4-3 3-6-4-3 3z" fill="#e8401c"/><path d="M30 8v8l-3-2-6 4-4-3 6-4-3-3z" fill="#6cc24a"/><path d="M2 26v-9l4 3 6-4 4 3-6 4 3 3z" fill="#f5b916"/><path d="M31 26H19l4-3-6-4 4-3 6 4 4-3z" fill="#2a7de1"/></svg>ProjectWise<svg class="mt-1" width="6" height="4"><use href="#car"/></svg></button><div class="rlabel">Model</div></div>
   <div class="rgroup d-flex flex-column w65"><button class="rbtn flex-grow-1"><svg class="i32" viewBox="0 0 32 32"><circle cx="16" cy="16" r="15.500" fill="#4a5057"/><path d="M6 19a10 10 0 1 1 20 0z" fill="#fff"/><path d="M10 17a6.500 6.500 0 0 1 12-2M15 19l6-9" stroke="#d22" stroke-width="2" fill="none"/></svg>Bentley<span>Dashboard</span></button><div class="rlabel">Dashboard</div></div>
   <div class="rgroup d-flex flex-column w157"><div class="d-flex flex-grow-1 justify-content-center">
     <button class="rbtn w76"><svg class="i32" viewBox="0 0 32 32"><use href="#lic"/><circle cx="24" cy="25" r="5" fill="none" stroke="#a8b1ba" stroke-width="3.500"/><circle cx="24" cy="25" r="7" fill="none" stroke="#a8b1ba" stroke-dasharray="3 2.500" stroke-width="1.500"/></svg>Configuration</button>
     <button class="rbtn w76"><svg class="i32" viewBox="0 0 32 32"><use href="#lic"/><path d="M19 22h12v9H19z" fill="#c9793f"/><path d="M23 21h4M19 26h12" stroke="#5a3116" stroke-width="1.500"/></svg>Management<span>Tool</span></button>
    </div><div class="rlabel">License</div></div>
  </section>

  <section class="tools d-flex flex-column">
   <div class="tbar first d-flex">
    <button aria-label="Anchor"><svg><use href="#anc"/></svg></button>
    <button aria-label="Spring"><svg viewBox="0 0 16 16"><path class="gl" d="M2 3h12M8 3v12M5 6l6 2-6 1 6 2-6 1 5 2"/><circle class="nd" cx="2" cy="3" r="1.700"/><circle class="nd" cx="14" cy="3" r="1.700"/></svg></button>
    <button aria-label="Rod"><svg viewBox="0 0 16 16"><path class="gl" d="M2 3h12"/><path d="M8 4v11" stroke="#888" stroke-width="4"/><circle class="nd" cx="2" cy="3" r="1.700"/><circle class="nd" cx="14" cy="3" r="1.700"/></svg></button>
    <button aria-label="Support"><svg viewBox="0 0 16 16"><path class="gl" d="M2 2h12M2 12h12M3 12v4M6 12v4M9 12v4M13 12v4"/><path d="M8 4l3 5H5z" fill="#1a8ad6"/><circle class="nd" cx="2" cy="2" r="1.600"/><circle class="nd" cx="14" cy="2" r="1.600"/></svg></button>
    <button aria-label="Constant"><svg viewBox="0 0 16 16"><path class="gl" d="M1 3h14M2 3V0M5 3V0M8 3V0M11 3V0M14 3V0M6 3v3l6 2-8 2 8 2-7 2h6"/></svg></button>
    <button aria-label="Guide"><svg viewBox="0 0 16 16"><path class="gl" d="M2 3h12M6 4v12M10 4v12"/><path d="M0 9h6M10 9h6M3 7v5M13 7v5" stroke="#4f9c22" stroke-width="1.800"/><circle class="nd" cx="2" cy="3" r="1.600"/><circle class="nd" cx="14" cy="3" r="1.600"/></svg></button>
    <button aria-label="Line stop"><svg viewBox="0 0 16 16"><path d="M0 8h5M11 8h5M8 0v5M8 11v5M1 6v4M15 6v4M6 1h4M6 15h4" stroke="#4f9c22" stroke-width="2"/><circle class="nd" cx="8" cy="8" r="2"/><circle class="nd" cx="4" cy="6" r="1.200"/><circle class="nd" cx="12" cy="10" r="1.200"/></svg></button>
    <button aria-label="Rotation"><svg viewBox="0 0 16 16"><path class="gl" d="M3 2h10M5 3v12M0 7h5M0 13h5"/><path d="M14 8a4 4 0 1 0 1 5M14 5v4h-4" stroke="#1a8ad6" stroke-width="2" fill="none"/><circle class="nd" cx="3" cy="2" r="1.500"/><circle class="nd" cx="13" cy="2" r="1.500"/></svg></button>
    <button aria-label="Damper"><svg viewBox="0 0 16 16"><path class="gl" d="M3 0v16M13 0v16"/><path d="M7 5v6h1.500l1-1V6l-1-1z" fill="none" stroke="#555"/><circle class="nd" cx="3" cy="8" r="1.600"/><circle class="nd" cx="13" cy="8" r="1.600"/></svg></button>
    <button aria-label="Tie link"><svg viewBox="0 0 16 16"><path class="gl" d="M2 14L14 2"/><path d="M5 11l6-6" stroke="#444b52" stroke-width="5.500"/><circle class="nd" cx="2" cy="14" r="1.600"/><circle class="nd" cx="14" cy="2" r="1.600"/></svg></button>
    <button class="more" aria-label="More tools"><svg><use href="#qd"/></svg></button>
   </div>
   <div class="tbar d-flex">
    <button aria-label="Zoom in"><svg viewBox="0 0 16 16"><use href="#lens"/><path d="M7 6.500h5M9.500 4v5" stroke="#1c3a5c" stroke-width="1.500"/></svg></button>
    <button aria-label="Zoom out"><svg viewBox="0 0 16 16"><use href="#lens"/><path d="M7 6.500h5" stroke="#1c3a5c" stroke-width="1.500"/></svg></button>
    <button aria-label="Zoom extents"><svg viewBox="0 0 16 16"><use href="#lens"/><circle cx="9.500" cy="6.500" r="2" fill="#1c3a5c"/></svg></button>
    <button aria-label="Pan"><svg viewBox="0 0 16 16"><path d="M4 10V3M7 9V1M10 9V1.500M13 10V4M2 9l3 4" stroke="#f08c1e" stroke-width="2.200" stroke-linecap="round"/><path d="M3 8h11v4l-3 4H6z" fill="#f08c1e"/></svg></button>
    <button aria-label="Show points"><svg viewBox="0 0 16 16"><circle class="nd" cx="2" cy="6" r="1.500"/><circle class="nd" cx="8" cy="2" r="1.500"/><circle class="nd" cx="2" cy="14" r="1.500"/><circle class="nd" cx="13" cy="5" r="1.500"/><ellipse cx="11" cy="12" rx="5" ry="3.800" fill="#111"/><circle cx="11" cy="12" r="1.500" fill="#fff"/></svg></button>
    <button aria-label="Left"><svg viewBox="0 0 16 16"><use href="#arr" transform="rotate(180 8 8)"/></svg></button>
    <button aria-label="Right"><svg viewBox="0 0 16 16"><use href="#arr"/></svg></button>
    <button aria-label="Up"><svg viewBox="0 0 16 16"><use href="#arr" transform="rotate(270 8 8)"/></svg></button>
    <button aria-label="Down"><svg viewBox="0 0 16 16"><use href="#arr" transform="rotate(90 8 8)"/></svg></button>
    <button aria-label="Inspect"><svg viewBox="0 0 16 16"><circle cx="8" cy="7" r="4.500" fill="#dff0ff" stroke="#444" stroke-width="1.500"/><path d="M0 7h16" stroke="#f08c1e" stroke-width="1.500"/><path d="M5 10l-4 5" stroke="#444" stroke-width="2"/></svg></button>
    <button aria-label="Wireframe"><svg viewBox="0 0 16 16"><path d="M5 2h6l3 12H2zM4 6h8M3 10h10M7 2v13M10 2v13M2 14c4 2 8 2 12 0M5 2c2-2 4-2 6 0" stroke="#222" fill="none" stroke-width="1.200"/></svg></button>
    <button aria-label="Shaded"><svg viewBox="0 0 16 16"><path d="M5 1h6l3 13c-3 2-9 2-12 0z" fill="url(#gCone)" stroke="#8aa" stroke-width=".6"/></svg></button>
    <button aria-label="Single view"><svg viewBox="0 0 16 16"><path d="M.5 2.500h15v11H.5z" fill="#fff" stroke="#0a7fd0"/><path d="M0 2h16v3H0z" fill="#0a7fd0"/></svg></button>
    <button aria-label="Two views"><svg viewBox="0 0 16 16"><path d="M.5 2.500h15v11H.5zM8 3v10" fill="#fff" stroke="#0a7fd0" stroke-width="1.300"/><path d="M0 2h16v3H0z" fill="#0a7fd0"/></svg></button>
    <button aria-label="Four views"><svg viewBox="0 0 16 16"><path d="M1 1h14v14H1zM8 1v14M1 8.500h14" fill="#fff" stroke="#0a7fd0" stroke-width="1.600"/><path d="M1 1h14v2H1z" fill="#0a7fd0"/></svg></button>
    <button aria-label="Iso 1"><svg viewBox="0 0 16 16"><path class="bl" d="M8 1l5 5v4l-5 5-5-5V6z"/><path d="M3 6l5 3v6l-5-5z" fill="#0a6db5"/><path class="bl" d="M3 6l5 3 5-3M8 9v6"/></svg></button>
    <button aria-label="Iso 2"><svg viewBox="0 0 16 16"><path class="bl" d="M8 1l5 5v4l-5 5-5-5V6z"/><path d="M13 6L8 9v6l5-5z" fill="#0a6db5"/><path class="bl" d="M3 6l5 3 5-3M8 9v6"/></svg></button>
    <button aria-label="Iso 3"><svg viewBox="0 0 16 16"><path class="bl" d="M8 1l5 5v4l-5 5-5-5V6z"/><path d="M8 1l5 5v4L8 7z" fill="#0a6db5"/><path class="bl" d="M3 10l5-3 5 3M8 7v8"/></svg></button>
    <button aria-label="Iso 4"><svg viewBox="0 0 16 16"><path class="bl" d="M8 1l5 5v4l-5 5-5-5V6z"/><path d="M8 1L3 6v4l5-3z" fill="#0a6db5"/><path class="bl" d="M3 10l5-3 5 3M8 7v8"/></svg></button>
    <button aria-label="Front"><svg viewBox="0 0 16 16"><path d="M1 5l4-4h10v10l-4 4H1z" fill="#e2f3ff"/><use href="#cub"/></svg></button>
    <button aria-label="Top"><svg viewBox="0 0 16 16"><path d="M1 5h10l4-4v10l-4 4H1z" fill="#e2f3ff"/><path d="M1 5l4-4h10l-4 4z" fill="#2f9ff0"/><use href="#cub"/></svg></button>
    <button aria-label="Elevation"><svg viewBox="0 0 16 16"><path d="M1 5l4-4h10v10l-4 4H1z" fill="#e2f3ff"/><path d="M1 5h10v10H1z" fill="#2f9ff0"/><use href="#cub"/></svg></button>
    <button aria-label="Side"><svg viewBox="0 0 16 16"><path d="M1 5l4-4h10v10l-4 4H1z" fill="#e2f3ff"/><path d="M11 5l4-4v10l-4 4z" fill="#2f9ff0"/><use href="#cub"/></svg></button>
    <button aria-label="Settings"><svg viewBox="0 0 16 16"><path d="M3 1v14M8 1v14M13 1v14" stroke="#555" stroke-width="1.300"/><circle cx="3" cy="4" r="2" fill="#fff" stroke="#c33" stroke-width="1.300"/><circle cx="8" cy="11" r="2" fill="#fff" stroke="#c33" stroke-width="1.300"/><circle cx="13" cy="6" r="2" fill="#fff" stroke="#4a9a2a" stroke-width="1.300"/></svg></button>
    <button aria-label="Toggle settings"><svg viewBox="0 0 16 16"><path d="M3 1v14M8 1v9M13 1v5" stroke="#555" stroke-width="1.300"/><circle cx="3" cy="4" r="2" fill="#fff" stroke="#c33" stroke-width="1.300"/><circle cx="8" cy="8" r="2" fill="#fff" stroke="#4a9a2a" stroke-width="1.300"/><path d="M9 9a3.500 3.500 0 1 0 5 0M11.500 7v4" stroke="#d22" stroke-width="1.600" fill="none"/></svg></button>
    <button aria-label="Point numbers"><svg><use href="#pid"/></svg></button>
    <button aria-label="Temperature"><svg viewBox="0 0 16 16"><path d="M5 2v9" stroke="#888" stroke-width="4.500" stroke-linecap="round"/><path d="M5 4v9" stroke="#d22" stroke-width="2.500"/></svg></button>
    <button aria-label="Pressure"><svg viewBox="0 0 16 16"><circle cx="8" cy="7" r="6" fill="#eee" stroke="#a55" stroke-width="2"/></svg></button>
    <button aria-label="Thermal"><svg viewBox="0 0 16 16"><path d="M8 2v9" stroke="#888" stroke-width="4" stroke-linecap="round"/></svg></button>
    <button aria-label="Section"><svg viewBox="0 0 16 16"><path d="M2 1h12v3h-4v9H6V4H2z" fill="#444"/></svg></button>
    <button aria-label="Rotate"><svg viewBox="0 0 16 16"><path d="M3 6l3-5v10M9 1c5 1 6 6 3 10" stroke="#366" stroke-width="2" fill="none"/></svg></button>
    <button aria-label="Hot"><svg viewBox="0 0 16 16"><path d="M9 0l4 6H5z" fill="#f08c1e"/><path d="M2 1v12" stroke="#d22" stroke-dasharray="2 2" stroke-width="2"/></svg></button>
    <button aria-label="Valve"><svg viewBox="0 0 16 16"><path d="M1 2l14 10V2L1 12z" fill="none" stroke="#555" stroke-width="1.500"/></svg></button>
    <button aria-label="Line"><svg viewBox="0 0 16 16"><path d="M1 8h14" stroke="#888"/></svg></button>
    <button aria-label="Tee"><svg viewBox="0 0 16 16"><path d="M8 1v12M2 13h12" stroke="#1a6aa6" stroke-width="1.500"/></svg></button>
    <button aria-label="Nodes"><svg viewBox="0 0 16 16"><circle class="nd" cx="3" cy="3" r="2.500"/><circle class="nd" cx="12" cy="3" r="2.500"/></svg></button>
    <button aria-label="Building"><svg viewBox="0 0 16 16"><path d="M8 0l6 6H2z" fill="#111"/></svg></button>
    <button aria-label="Grid"><svg viewBox="0 0 16 16"><path d="M2 8h12" stroke="#888"/></svg></button>
    <button aria-label="Soil"><svg viewBox="0 0 16 16"><path d="M8 7C5 7 2 4 2 0c4 0 6 3 6 7zM8 7c0-4 2-7 6-7 0 4-3 7-6 7z" fill="#4f9c22"/></svg></button>
    <button aria-label="Beam"><svg viewBox="0 0 16 16"><path d="M2 8h12" stroke="#888"/></svg></button>
    <button aria-label="Link"><svg viewBox="0 0 16 16"><circle class="nd" cx="3" cy="3" r="2"/><circle class="nd" cx="13" cy="3" r="2"/></svg></button>
    <button class="more" aria-label="More tools"></button>
   </div>
   <div class="tbar d-flex">
    <button aria-label="Run"><svg viewBox="0 0 16 16"><path class="gl" d="M2 8h12"/><circle class="nd" cx="2.500" cy="8" r="1.700"/><circle class="nd" cx="13.500" cy="8" r="1.700"/></svg></button>
    <button aria-label="Bend"><svg viewBox="0 0 16 16"><path class="gl" d="M2 2h8q4 0 4 4v8"/><circle class="nd" cx="2.500" cy="2" r="1.700"/><circle class="nd" cx="14" cy="14" r="1.700"/></svg></button>
    <button aria-label="Tee"><svg viewBox="0 0 16 16"><path class="gl" d="M2 13h12M8 3v10"/><circle class="nd" cx="8" cy="3" r="1.700"/><circle class="nd" cx="2.500" cy="13" r="1.700"/><circle class="nd" cx="13.500" cy="13" r="1.700"/></svg></button>
    <button aria-label="Reducer"><svg viewBox="0 0 16 16"><path class="gl" d="M3 2v12l11-4V6z"/><circle class="nd" cx="3" cy="8" r="1.700"/><circle class="nd" cx="14" cy="8" r="1.700"/></svg></button>
    <button aria-label="Valve"><svg viewBox="0 0 16 16"><path class="gl" d="M1.500 3v10l13-10v10z"/><circle class="nd" cx="2" cy="8" r="1.500"/><circle class="nd" cx="14" cy="8" r="1.500"/></svg></button>
    <button aria-label="Flexible joint"><svg viewBox="0 0 16 16"><path d="M0 4c4-2 4 2 8 0s4 2 8 0M0 12c4-2 4 2 8 0s4 2 8 0" stroke="#e8962a" stroke-width="1.800" fill="none"/><path class="gl" d="M2 8h12"/><circle class="nd" cx="3" cy="8" r="1.700"/><circle class="nd" cx="13" cy="8" r="1.700"/></svg></button>
    <button aria-label="Flange"><svg viewBox="0 0 16 16"><path d="M2 3v10M14 3v10" stroke="#d22" stroke-width="2.500"/><path class="gl" d="M4 8h8"/><circle class="nd" cx="5" cy="8" r="1.500"/><circle class="nd" cx="11" cy="8" r="1.500"/></svg></button>
    <button aria-label="Cut"><svg viewBox="0 0 16 16"><path class="gl" d="M2 8c4-5 6 5 12 0"/><circle class="nd" cx="2" cy="8" r="1.700"/><circle class="nd" cx="14" cy="8" r="1.700"/></svg></button>
    <button aria-label="Cross"><svg viewBox="0 0 16 16"><path class="gl" d="M0 8h16M7 0v16"/><path d="M10 0v16" stroke="#999"/><circle class="nd" cx="7" cy="8" r="1.700"/></svg></button>
    <button aria-label="Nozzle"><svg viewBox="0 0 16 16"><path d="M8 0v16M4 4l8 8M12 4l-8 8" stroke="#d22" stroke-width="2" stroke-dasharray="2 1.500"/><circle class="nd" cx="2" cy="8" r="1.500"/><circle class="nd" cx="8" cy="8" r="1.500"/><circle class="nd" cx="14" cy="8" r="1.500"/></svg></button>
    <button aria-label="Anchor"><svg><use href="#anc"/></svg></button>
    <button aria-label="Pipe identifier"><svg><use href="#pid"/></svg></button>
    <button aria-label="Pressure and temperature"><svg viewBox="0 0 16 16"><circle cx="4" cy="4" r="3.300" fill="#fff" stroke="#555" stroke-width="1.300"/><circle cx="12" cy="4" r="3.300" fill="#fff" stroke="#555" stroke-width="1.300"/><path class="gl" d="M4 8v6h8V8"/><circle class="nd" cx="3" cy="14" r="1.500"/><circle class="nd" cx="13" cy="14" r="1.500"/></svg></button>
    <button aria-label="Load"><svg viewBox="0 0 16 16"><path d="M3 4v8M1 9l2 3 2-3" stroke="#4f9c22" stroke-width="1.600" fill="none"/><path d="M6 1h9l-3 11H9z" fill="#555"/><path d="M5 15h11" stroke="#111" stroke-width="1.500"/></svg></button>
    <button aria-label="Rotate"><svg viewBox="0 0 16 16"><path d="M2 9V2M5 2v7M8 2c4 0 6 3 6 7M11 7l3 3" stroke="#3d6a80" stroke-width="1.500" fill="none"/><circle class="nd" cx="5" cy="13" r="1.500"/><path d="M9 14l3-3" stroke="#d22" stroke-width="2"/></svg></button>
    <button aria-label="Weight"><svg viewBox="0 0 16 16"><circle cx="8" cy="3" r="2" fill="none" stroke="#777" stroke-width="1.500"/><path d="M4 5h8l3.500 10.500H.5z" fill="#8b8b85"/></svg></button>
    <button aria-label="Distributed load"><svg viewBox="0 0 16 16"><circle cx="8" cy="2" r="1.500" fill="none" stroke="#777" stroke-width="1.500"/><path d="M4 4h8l2.500 6h-13z" fill="#8b8b85"/><path d="M3 9v6M8 9v6M13 9v6M1 13l2 2 2-2M6 13l2 2 2-2M11 13l2 2 2-2" stroke="#d22" fill="none"/></svg></button>
    <button aria-label="Loop"><svg viewBox="0 0 16 16"><path class="gl" d="M2 2h8q5 1 4 5t-6 4l-5 4"/><circle class="nd" cx="2" cy="2" r="1.500"/><circle class="nd" cx="8" cy="2" r="1.500"/><circle class="nd" cx="14" cy="7" r="1.500"/><circle class="nd" cx="6" cy="13" r="1.500"/></svg></button>
    <button aria-label="Soil"><svg viewBox="0 0 16 16"><path d="M8 6C5 6 2 4 1 0c4 0 7 3 7 6zM8 6c0-3 2-5 6-5 0 3-3 5-6 5z" fill="#4f9c22"/><path d="M0 7h9" stroke="#8a5a2a" stroke-width="2"/><circle cx="5.500" cy="12" r="3.800" fill="#1a8ad6"/><path d="M5.500 9.500v5" stroke="#fff"/><path d="M9 9h6v6H9M10 12h4" stroke="#1a8ad6" stroke-width="1.800" fill="none"/></svg></button>
    <button aria-label="Insert"><svg viewBox="0 0 16 16"><path class="gl" d="M0 8h16"/><path d="M5.500 5.500h5v5h-5z" fill="#fff" stroke="#1a8ad6" stroke-width="1.600"/><circle class="nd" cx="2" cy="8" r="1.300"/><circle class="nd" cx="14" cy="8" r="1.300"/></svg></button>
    <button aria-label="Weld"><svg viewBox="0 0 16 16"><path d="M1 15l4-5" stroke="#555" stroke-width="2"/><path d="M3 12l7-7" stroke="#4a5057" stroke-width="5"/><path d="M10 5l4-1" stroke="#444" stroke-width="1.500"/><path d="M13 0l1 3 2 1" stroke="#f08c1e" fill="none"/></svg></button>
    <button aria-label="Length"><svg viewBox="0 0 16 16"><path class="gl" d="M1 4h8"/><circle class="nd" cx="2" cy="4" r="1.300"/><circle class="nd" cx="8" cy="4" r="1.300"/><path d="M10 4h6M14 2v4M0 13h16M1 11v4M15 11v4" stroke="#d22" stroke-width="1.300"/></svg></button>
    <button aria-label="Fluid"><svg viewBox="0 0 16 16"><path d="M8 0c3 5 5 7 5 10.500a5 5 0 0 1-10 0C3 7 5 5 8 0z" fill="#1a86d0"/></svg></button>
    <button aria-label="Building"><svg viewBox="0 0 16 16"><path d="M9 0l6 6H3zM6 4h8v4H6z" fill="#111"/><path d="M0 8h16v8H0z" fill="#57a82b"/><circle class="nd" cx="11" cy="12" r="2.500"/><path d="M1 12h7" stroke="#fff"/></svg></button>
    <button aria-label="Building frame"><svg viewBox="0 0 16 16"><path d="M9 0l6 6H3zM6 4h8v4H6z" fill="#111"/><path d="M0 8h16v8H0z" fill="#57a82b"/><path d="M9 10h6M12 10v5M9 15h6" stroke="#333" stroke-width="1.600"/><path d="M1 12h7" stroke="#fff"/></svg></button>
    <button aria-label="Beam"><svg viewBox="0 0 16 16"><path d="M2 0h12v3l-4 2v6l4 2v3H2v-3l4-2V5L2 3z" fill="#555"/></svg></button>
    <button aria-label="Gear"><svg viewBox="0 0 16 16"><circle cx="8" cy="8" r="5" fill="none" stroke="#555" stroke-width="4"/></svg></button>
   </div>
  </section>

  <section class="view d-flex flex-grow-1">
   <div class="draw flex-grow-1 d-flex align-items-end ps-4 pb-5">
    <svg width="110" height="84" viewBox="27 851 110 84" role="img" aria-label="Axes" font-family="Liberation Sans" font-size="11">
     <path d="M78 907V888" stroke="#b22" stroke-width="2"/><path d="M78 873l5 16h-10z" fill="#f04040"/>
     <path d="M78 907L44 886" stroke="#d8cf20" stroke-width="3"/><path d="M33 880l14 3-5 8z" fill="#f0e800"/><path d="M45 883l4 3-4 6-3-3z" fill="#5e5a00"/>
     <path d="M78 907l-14 10" stroke="#2ccc3c" stroke-width="3"/><path d="M50 923l7-11 9 5-2 5z" fill="#3cf040"/>
     <path d="M78 907l14 10" stroke="#3030c0" stroke-width="3"/><path d="M107 923l-7-11-9 5 2 5z" fill="#4444f8"/>
     <text x="78" y="869">Y</text><text x="32" y="877">N</text><text x="44" y="922">Z</text><text x="111" y="922">X</text>
    </svg>
   </div>
   <div class="sbar d-flex flex-column align-items-center py-1"><svg width="12" height="12"><use href="#up"/></svg><i class="thumb"></i><svg class="mt-auto" width="12" height="12" color="#555"><use href="#dn"/></svg></div>
  </section>
  <div class="hbar d-flex align-items-center justify-content-between"><svg width="11" height="11"><use href="#lf"/></svg><svg width="11" height="11"><use href="#rt"/></svg></div>
  <footer class="d-flex">
   <div class="status flex-grow-1 d-flex align-items-center">Command:</div>
   <div class="stat-r d-flex align-items-center"><i style="width:88px"></i><i style="width:73px"></i><i style="width:49px"></i><i style="width:121px"></i></div>
  </footer>
 </main>

 <!-- run indicator -->
 <div class="runner position-absolute d-flex align-items-center">
  <button aria-label="Test run"><svg class="i32" viewBox="0 0 32 32"><use href="#tc"/><path d="M1 1h30v30H1z" fill="none" stroke="#12343f" stroke-width="2"/></svg></button><i class="sep"></i>
  <button aria-label="Pause"><svg width="16" height="16"><path d="M0 0h6.500v16H0zM9.500 0H16v16H9.500z" fill="#0ab0ff"/></svg></button>
  <button aria-label="Stop" class="ms-2"><svg width="18" height="16"><path d="M2 0h16v16H2z" fill="#0ab0ff"/></svg></button>
 </div>
 <div class="bubble position-absolute"><p>Waiting for the dlgError object.</p><div class="bar"></div><p>InsertModel-DAT_DTP</p></div>

 <section class="win win-combo" aria-label="Selection">
  <header class="d-flex align-items-center justify-content-end"><button aria-label="Close"><svg width="13" height="13"><use href="#x"/></svg></button></header>
  <div class="combo d-flex"><select class="flex-grow-1" aria-label="Value"><option></option></select><span class="raised"><svg width="9" height="5"><path d="M0 0h9L4.500 5z"/></svg></span></div>
 </section>
 <section class="win win-open" aria-label="Open">
  <header class="d-flex align-items-center justify-content-between"><span>Open</span><button aria-label="Close"><svg width="13" height="13"><use href="#x"/></svg></button></header>
 </section>

 <section class="win win-review" aria-label="Review Component Data">
  <header class="d-flex align-items-center">
   <svg width="18" height="16" viewBox="0 0 18 16"><path d="M.5.5h17v15H.5z" fill="#eee" stroke="#999"/><path d="M2 3h8v11H2z" fill="#2d7f6e"/><path d="M11 3h2v11h-2z" fill="#9bb"/></svg>
   <span class="ms-2">Review Component Data</span>
   <span class="ms-auto d-flex"><button class="wbtn" aria-label="Minimize"><svg class="mx-auto" width="12" height="12"><use href="#mn"/></svg></button><button class="wbtn" disabled aria-label="Maximize"><svg class="mx-auto" width="12" height="12"><use href="#mx"/></svg></button><button class="wbtn" aria-label="Close"><svg class="mx-auto" width="12" height="12"><use href="#x"/></svg></button></span>
  </header>
  <div class="sheet d-flex flex-column">
   <div class="d-flex flex-grow-1">
    <div class="flex-grow-1">
     <table class="table mb-0 grid">
      <colgroup><col class="c21"><col class="c56"><col class="c58"><col class="c106"><col class="c76"><col class="c83"><col class="c52"><col class="c52"><col class="c52"><col class="c59"><col class="c52"><col class="c62"></colgroup>
      <thead><tr><th></th><th><br>From</th><th><br>To</th><th><br>Material</th><th><br>Pipe ID</th><th><br>Nominal<br>in</th><th>Case 1<br>Pres.<br>psi</th><th>Case 1<br>Temp.<br>deg F</th><th>Case 1<br>Auto</th><th>Case 1<br>Expan.<br>in/100ft</th><th>Case 1<br>Auto</th><th>Case 1<br>Hot Mod.<br>E6 psi</th></tr></thead>
     </table>
    </div>
    <div class="vs d-flex flex-column"><span class="raised h19"><svg width="9" height="5"><path d="M0 5h9L4.500 0z"/></svg></span><span class="raised flex-grow-1 mt-1"></span><span class="raised mt-1 h19"><svg width="9" height="5"><path d="M0 0h9L4.500 5z"/></svg></span></div>
   </div>
   <div class="sheettabs d-flex">
    <button class="raised" aria-label="First"><svg width="8" height="9"><path d="M1 0v9M8 0v9L3 4.500z" fill="#777" stroke="#777" stroke-width=".5"/></svg></button><button class="raised" aria-label="Previous"><svg width="6" height="9"><path d="M5 0v9L1 4.500z" fill="#777"/></svg></button><button class="raised" aria-label="Next"><svg width="6" height="9"><path d="M1 0v9l4-4.500z"/></svg></button><button class="raised" aria-label="Last"><svg width="8" height="9"><path d="M0 0v9l5-4.500zM6 0h1.500v9H6z"/></svg></button>
    <div class="tabs d-flex">
     <svg viewBox="0 0 12 21"><path d="M1 0h11v21H8z" fill="#fff"/><path d="M1 0l7 21" stroke="#000" stroke-width="1.500"/></svg>
     <button class="on">Pres/Temp/PipeID</button><svg><use href="#sl"/></svg>
     <button>Pipe Properties</button><svg><use href="#sl"/></svg>
     <button>Segment</button><svg><use href="#sl"/></svg>
     <button>Point</button><svg><use href="#sl"/></svg>
     <button>Anchor/NodeLink</button><svg><use href="#sl"/></svg>
     <button>Support</button><svg><use href="#sl"/></svg>
     <button>Tee</button><svg><use href="#sl"/></svg>
     <button>Bend</button><svg><use href="#sl"/></svg>
     <button>Valve</button>
    </div>
    <span class="raised ms-1"><svg width="6" height="9"><path d="M5 0v9L0 4.500z"/></svg></span><span class="raised long"></span><span class="raised"><svg width="6" height="9"><path d="M1 0v9l5-4.500z"/></svg></span>
   </div>
  </div>
 </section>

 <svg class="pointer position-absolute" width="30" height="36" viewBox="0 0 30 36"><circle cx="18" cy="10" r="7" fill="#fff" stroke="#2b9af3" stroke-width="4.500"/><path d="M.7 10.500v19.500l4-4 4 7.500 3-1.500-3.500-7h6z" fill="#fff" stroke="#111"/></svg>

 <div class="task big d-flex align-items-stretch">
  <button class="t start" aria-label="Start"><svg><use href="#win"/></svg></button>
  <label class="search d-flex align-items-center"><svg width="26" height="26"><circle cx="13" cy="13" r="11" fill="none" stroke="#111" stroke-width="3"/></svg><input class="flex-grow-1" placeholder="Type here to search" aria-label="Search"><svg width="16" height="22" viewBox="0 0 16 22"><path d="M4.500 1h7v12h-7zM1.500 11v5h13v-5M8 16v5M4 21h8" fill="none" stroke="#333" stroke-width="1.500"/></svg></label>
  <button class="t" aria-label="Task view"><svg class="tview"><use href="#tv"/></svg></button>
  <button class="t" aria-label="Edge"><svg><use href="#edge"/></svg></button>
  <button class="t" aria-label="Store"><svg><use href="#store"/></svg></button>
  <button class="t run" aria-label="Mail"><svg><use href="#mail"/></svg></button>
  <button class="t run multi" aria-label="Outlook"><svg><use href="#outl"/></svg></button>
  <button class="t run" aria-label="Teams"><svg><use href="#teams"/></svg></button>
  <button class="t run act" aria-label="AutoPIPE"><svg><use href="#ap"/></svg></button>
  <button class="t run" aria-label="TestComplete"><svg><use href="#tc"/></svg></button>
  <button class="t run" aria-label="Chrome"><svg><use href="#chr"/></svg></button>
  <button class="t run multi" aria-label="File Explorer"><svg><use href="#exp"/></svg></button>
  <button class="t run multi" aria-label="Skype"><svg><use href="#sky"/></svg></button>
  <button class="t run multi" aria-label="Notepad"><svg><use href="#note"/></svg></button>
  <button class="t run multi" aria-label="Excel"><svg><use href="#xls"/></svg></button>
  <button class="t run multi" aria-label="Internet Explorer"><svg><use href="#ie"/></svg></button>
  <button class="t run" aria-label="Teamwork"><svg><use href="#ppl"/></svg></button>
  <div class="ms-auto d-flex align-items-center tray">
   <svg width="18" height="20" viewBox="0 0 18 20" fill="none" stroke="#eee" stroke-width="1.300"><circle cx="6" cy="10" r="3"/><path d="M1 19c0-6 10-6 10 0"/><circle cx="13" cy="4" r="3"/><path d="M9 9c3-2 8 0 8 4"/></svg>
   <svg class="ms-3" width="16" height="10" viewBox="0 0 16 10"><path d="M1 9l7-7 7 7" fill="none" stroke="#eee" stroke-width="1.500"/></svg>
   <svg width="20" height="16" viewBox="0 0 20 16"><path d="M4 4h14v9H4z" fill="#fff"/><path d="M3 3h16v11H3zM1 1v4h4V1" fill="none" stroke="#fff"/></svg>
   <svg width="16" height="16" viewBox="0 0 16 16" fill="none" stroke="#eee" stroke-width="1.400"><path d="M1 15C1 7 7 1 15 1M5 15C5 9 9 5 15 5M9 15c0-4 2-6 6-6"/><circle cx="14" cy="14" r="1" fill="#eee"/></svg>
   <svg width="20" height="16" viewBox="0 0 20 16" fill="none" stroke="#eee" stroke-width="1.200"><path d="M1 5h3l4-4v14l-4-4H1zM11 5q2 3 0 6"/><path d="M14 3q3 5 0 10M17 1q4 7 0 14" stroke="#777"/></svg>
   <div class="clock">4:00 PM<br>9/26/2019</div>
   <svg class="ms-2" width="30" height="32" viewBox="0 0 30 32"><path d="M1 2h20v19H12l-4 4v-4H1z" fill="#fff"/><path d="M5 7h12M5 11h12M5 15h8" stroke="#222" stroke-width="1.500"/><circle cx="20" cy="22" r="9" fill="#3c4444" stroke="#999"/><text x="20" y="27" font-size="14" text-anchor="middle" fill="#fff">1</text></svg>
   <i class="peek"></i>
  </div>
 </div>
</div>

<!-- right monitor -->
<div class="monitor d-flex flex-column position-relative">
 <section class="explorer d-flex flex-column flex-grow-1" aria-label="Network folder">
  <header class="ex-title d-flex align-items-center"><svg class="i16"><use href="#f"/></svg><i class="vr1"></i><svg class="ms-1" width="14" height="14"><use href="#chk"/></svg><svg class="i16"><use href="#f"/></svg><svg width="8" height="8" color="#000"><use href="#qd"/></svg><i class="vr1 ms-1"></i><span>Discrepencies9_26_2019</span>
   <span class="ms-auto d-flex"><button aria-label="Minimize"><svg width="11" height="11"><use href="#mn"/></svg></button><button aria-label="Restore"><svg width="11" height="11"><use href="#rs"/></svg></button><button aria-label="Close"><svg width="11" height="11"><use href="#x"/></svg></button></span></header>
  <nav class="ex-tabs d-flex align-items-center"><a href="#" class="file">File</a><a href="#">Home</a><a href="#">Share</a><a href="#">View</a><svg class="ms-auto me-3" width="9" height="9" color="#999"><use href="#dn"/></svg><svg class="me-1" width="14" height="14"><use href="#hp"/></svg></nav>
  <div class="ex-addr d-flex">
   <button class="navb" aria-label="Back"><svg width="14" height="14"><use href="#al"/></svg></button><button class="navb off" aria-label="Forward"><svg width="14" height="14"><use href="#ar"/></svg></button><button class="navb sm" aria-label="Recent locations"><svg width="8" height="8"><use href="#dn"/></svg></button><button class="navb upb" aria-label="Up"><svg width="14" height="14"><use href="#au"/></svg></button>
   <div class="crumbs d-flex flex-grow-1 align-items-center"><svg class="i16"><use href="#f"/></svg><i class="chev"></i><a href="#">Network</a><i class="chev"></i><a href="#">isbprdfs03</a><i class="chev"></i><a href="#">QA</a><i class="chev"></i><a href="#">TestingProjects</a><i class="chev"></i><a href="#">AlphaTesting</a><i class="chev"></i><a href="#">CAE</a><i class="chev"></i><a href="#">AutoPIPE</a><i class="chev"></i><a href="#">AutoPIPERegression</a><i class="chev"></i><a href="#">UIAutomation</a><i class="chev"></i><a href="#">Discrepancies</a><i class="chev"></i><a href="#">Discrepencies9_26_2019</a><i class="chev"></i>
    <svg class="ms-auto me-1" width="10" height="10" color="#555"><use href="#dn"/></svg><button class="navb sm border-start" aria-label="Refresh"><svg width="13" height="13"><use href="#rf"/></svg></button></div>
   <label class="find d-flex align-items-center"><input class="flex-grow-1" placeholder="Search Discrepencies9_26_2019" aria-label="Search folder"><svg width="14" height="14"><use href="#mg"/></svg></label>
  </div>
  <div class="d-flex flex-grow-1">
   <div class="tree d-flex"><div class="rows flex-grow-1 d-flex flex-column">
    <a href="#" class="top"><svg class="i16"><use href="#star"/></svg>Quick access</a>
    <a href="#"><svg class="i16"><use href="#desk"/></svg>Desktop<svg class="pin"><use href="#pin"/></svg></a>
    <a href="#"><svg class="i16"><use href="#down"/></svg>Downloads<svg class="pin"><use href="#pin"/></svg></a>
    <a href="#"><svg class="i16"><use href="#doc"/></svg>Documents<svg class="pin"><use href="#pin"/></svg></a>
    <a href="#"><svg class="i16"><use href="#pic"/></svg>Pictures<svg class="pin"><use href="#pin"/></svg></a>
    <a href="#"><svg class="i16"><use href="#f"/></svg>Export</a>
    <a href="#"><svg class="i16"><use href="#f"/></svg>Export</a>
    <a href="#"><svg class="i16"><use href="#f"/></svg>Models</a>
    <a href="#"><svg class="i16"><use href="#f"/></svg>Models</a>
    <a href="#" class="top gap"><svg class="i16"><use href="#cloud"/></svg>OneDrive</a>
    <a href="#" class="top gap"><svg class="i16"><use href="#pc"/></svg>This PC</a>
    <a href="#"><svg class="i16"><use href="#cube3"/></svg>3D Objects</a>
    <a href="#"><svg class="i16"><use href="#desk"/></svg>Desktop</a>
    <a href="#"><svg class="i16"><use href="#doc"/></svg>Documents</a>
    <a href="#"><svg class="i16"><use href="#down"/></svg>Downloads</a>
    <a href="#"><svg class="i16"><use href="#mus"/></svg>Music</a>
    <a href="#"><svg class="i16"><use href="#pic"/></svg>Pictures</a>
    <a href="#"><svg class="i16"><use href="#vid"/></svg>Videos</a>
    <a href="#"><svg class="i16"><use href="#drvw"/></svg>Windows (C:)</a>
    <a href="#"><svg class="i16"><use href="#drv"/></svg>Data (D:)</a>
    <a href="#" class="top gap sel"><svg class="i16"><use href="#net"/></svg>Network</a>
   </div></div>
   <div>
    <table class="table table-borderless mb-0 files">
     <colgroup><col class="c325"><col class="c150"><col class="c150"><col class="c100"></colgroup>
     <thead><tr><th>Name<svg class="sort" width="9" height="7" viewBox="0 0 9 7"><path d="M1 5l3.500-3.500L8 5" fill="none" stroke="#777"/></svg></th><th>Date modified</th><th>Type</th><th>Size</th></tr></thead>
     <tbody><tr><td><span class="d-flex align-items-center"><svg class="i16"><use href="#f"/></svg>DistributedLoad_DTP</span></td><td>9/26/2019 3:00 PM</td><td>File folder</td><td></td></tr></tbody>
    </table>
   </div>
  </div>
  <footer class="ex-status d-flex align-items-center"><span>1 item</span><i class="vr1"></i><span>State:</span><svg class="mx-1" width="16" height="16" viewBox="0 0 16 16"><circle cx="8" cy="8" r="8" fill="#3fae2a"/><path d="M4 8a4 4 0 0 1 7-2M12 8a4 4 0 0 1-7 2" stroke="#f5e663" stroke-width="2" fill="none"/><path d="M13 7H9l2-3zM3 9h4l-2 3z" fill="#f5e663"/></svg><span>Online</span><i class="vr1"></i>
   <span class="ms-auto d-flex me-1"><button class="vbtn on" aria-label="Details"><svg class="i16"><use href="#dets"/></svg></button><button class="vbtn" aria-label="Large icons"><svg width="14" height="14"><use href="#bigs"/></svg></button></span></footer>
 </section>

 <section class="win win-ex explorer d-flex flex-column" aria-label="Temp folder">
  <header class="ex-title d-flex align-items-center"><svg class="i16"><use href="#f"/></svg><i class="vr1"></i><svg class="ms-1" width="14" height="14"><use href="#chk"/></svg><svg class="i16"><use href="#f"/></svg><svg width="8" height="8" color="#000"><use href="#qd"/></svg><i class="vr1 ms-1"></i><span>Discrepencies9_26_2019</span>
   <span class="ms-auto d-flex"><button aria-label="Minimize"><svg width="11" height="11"><use href="#mn"/></svg></button><button aria-label="Maximize"><svg width="11" height="11"><use href="#mx"/></svg></button><button aria-label="Close"><svg width="11" height="11"><use href="#x"/></svg></button></span></header>
  <nav class="ex-tabs d-flex align-items-center"><a href="#" class="file">File</a><a href="#">Home</a><a href="#">Share</a><a href="#">View</a><svg class="ms-auto me-3" width="9" height="9" color="#999"><use href="#dn"/></svg><svg class="me-1" width="14" height="14"><use href="#hp"/></svg></nav>
  <div class="ex-addr d-flex">
   <button class="navb" aria-label="Back"><svg width="14" height="14"><use href="#al"/></svg></button><button class="navb off" aria-label="Forward"><svg width="14" height="14"><use href="#ar"/></svg></button><button class="navb sm" aria-label="Recent locations"><svg width="8" height="8"><use href="#dn"/></svg></button><button class="navb upb" aria-label="Up"><svg width="14" height="14"><use href="#au"/></svg></button>
   <div class="crumbs d-flex flex-grow-1 align-items-center"><svg class="i16"><use href="#f"/></svg><i class="chev"></i><a href="#">This PC</a><i class="chev"></i><a href="#">Windows (C:)</a><i class="chev"></i><a href="#">Users</a><i class="chev"></i><a href="#">Tayyabaa.Mehreen</a><i class="chev"></i><a href="#">AppData</a><i class="chev"></i><a href="#">Local</a><i class="chev"></i><a href="#">Temp</a><i class="chev"></i><a href="#">Discrepencies9_26_2019</a><i class="chev"></i>
    <svg class="ms-auto me-1" width="10" height="10" color="#555"><use href="#dn"/></svg><button class="navb sm border-start" aria-label="Refresh"><svg width="13" height="13"><use href="#rf"/></svg></button></div>
   <label class="find d-flex align-items-center"><input class="flex-grow-1" placeholder="Search Discrepencies9_26_2019" aria-label="Search folder"><svg width="14" height="14"><use href="#mg"/></svg></label>
  </div>
  <div class="d-flex flex-grow-1 overflow-hidden">
   <div class="tree d-flex"><div class="rows flex-grow-1 d-flex flex-column">
    <a href="#" class="top"><svg class="i16"><use href="#star"/></svg>Quick access</a>
    <a href="#"><svg class="i16"><use href="#desk"/></svg>Desktop<svg class="pin"><use href="#pin"/></svg></a>
    <a href="#"><svg class="i16"><use href="#down"/></svg>Downloads<svg class="pin"><use href="#pin"/></svg></a>
    <a href="#"><svg class="i16"><use href="#doc"/></svg>Documents<svg class="pin"><use href="#pin"/></svg></a>
    <a href="#"><svg class="i16"><use href="#pic"/></svg>Pictures<svg class="pin"><use href="#pin"/></svg></a>
    <a href="#"><svg class="i16"><use href="#f"/></svg>Export</a>
    <a href="#"><svg class="i16"><use href="#f"/></svg>Export</a>
    <a href="#"><svg class="i16"><use href="#f"/></svg>Models</a>
    <a href="#"><svg class="i16"><use href="#f"/></svg>Models</a>
    <a href="#" class="top gap"><svg class="i16"><use href="#cloud"/></svg>OneDrive</a>
    <a href="#" class="top gap"><svg class="i16"><use href="#pc"/></svg>This PC</a>
    <a href="#"><svg class="i16"><use href="#cube3"/></svg>3D Objects</a>
    <a href="#"><svg class="i16"><use href="#desk"/></svg>Desktop</a>
    <a href="#"><svg class="i16"><use href="#doc"/></svg>Documents</a>
    <a href="#"><svg class="i16"><use href="#down"/></svg>Downloads</a>
    <a href="#"><svg class="i16"><use href="#mus"/></svg>Music</a>
    <a href="#"><svg class="i16"><use href="#pic"/></svg>Pictures</a>
    <a href="#"><svg class="i16"><use href="#vid"/></svg>Videos</a>
    <a href="#" class="sel"><svg class="i16"><use href="#drvw"/></svg>Windows (C:)</a>
    <a href="#"><svg class="i16"><use href="#drv"/></svg>Data (D:)</a>
    <a href="#" class="top gap"><svg class="i16"><use href="#net"/></svg>Network</a>
   </div>
   <div class="scroll d-flex flex-column align-items-stretch"><svg class="mx-auto my-1" width="10" height="10"><use href="#up"/></svg><i class="flex-grow-1"></i><svg class="mx-auto my-2" width="10" height="10" color="#555"><use href="#dn"/></svg></div></div>
   <div>
    <table class="table table-borderless mb-0 files">
     <colgroup><col class="c325"><col class="c150"><col class="c150"><col class="c100"></colgroup>
     <thead><tr><th>Name<svg class="sort" width="9" height="7" viewBox="0 0 9 7"><path d="M1 5l3.500-3.500L8 5" fill="none" stroke="#777"/></svg></th><th>Date modified</th><th>Type</th><th>Size</th></tr></thead>
     <tbody>
      <tr class="sel"><td><span class="d-flex align-items-center"><svg class="i16"><use href="#f"/></svg>DistributedLoad_DTP</span></td><td>9/26/2019 3:00 PM</td><td>File folder</td><td></td></tr>
      <tr><td><span class="d-flex align-items-center"><svg class="i16"><use href="#f"/></svg>ExportDXF</span></td><td>9/26/2019 3:14 PM</td><td>File folder</td><td></td></tr>
      <tr><td><span class="d-flex align-items-center"><svg class="i16"><use href="#f"/></svg>ImportExportPXF</span></td><td>9/26/2019 3:32 PM</td><td>File folder</td><td></td></tr>
      <tr><td><span class="d-flex align-items-center"><svg class="i16"><use href="#f"/></svg>InsertAPModel</span></td><td>9/26/2019 3:56 PM</td><td>File folder</td><td></td></tr>
      <tr><td><span class="d-flex align-items-center"><svg class="i16"><use href="#f"/></svg>SaveAsNTL</span></td><td>9/26/2019 3:21 PM</td><td>File folder</td><td></td></tr>
     </tbody>
    </table>
   </div>
  </div>
  <footer class="ex-status d-flex align-items-center"><span>5 items</span><i class="vr1"></i><span>1 item selected</span><i class="vr1"></i>
   <span class="ms-auto d-flex me-1"><button class="vbtn on" aria-label="Details"><svg class="i16"><use href="#dets"/></svg></button><button class="vbtn" aria-label="Large icons"><svg width="14" height="14"><use href="#bigs"/></svg></button></span></footer>
 </section>

 <div class="task small2 d-flex align-items-stretch">
  <button class="t" aria-label="Start"><svg><use href="#win"/></svg></button>
  <button class="t" aria-label="Cortana"><svg viewBox="0 0 32 32"><circle cx="16" cy="16" r="9" fill="none" stroke="#fff" stroke-width="3"/></svg></button>
  <button class="t" aria-label="Task view"><svg><use href="#tv"/></svg></button>
  <button class="t" aria-label="Edge"><svg><use href="#edge"/></svg></button>
  <button class="t" aria-label="Store"><svg><use href="#store"/></svg></button>
  <button class="t run" aria-label="Mail"><svg><use href="#mail"/></svg></button>
  <button class="t run multi" aria-label="Outlook"><svg><use href="#outl"/></svg></button>
  <button class="t run" aria-label="Teams"><svg><use href="#teams"/></svg></button>
  <button class="t run act" aria-label="AutoPIPE"><svg><use href="#ap"/></svg></button>
  <button class="t run" aria-label="TestComplete"><svg><use href="#tc"/></svg></button>
  <button class="t run" aria-label="Chrome"><svg><use href="#chr"/></svg></button>
  <button class="t run multi" aria-label="File Explorer"><svg><use href="#exp"/></svg></button>
  <button class="t run multi" aria-label="Skype"><svg><use href="#sky"/></svg></button>
  <button class="t run multi" aria-label="Notepad"><svg><use href="#note"/></svg></button>
  <button class="t run multi" aria-label="Excel"><svg><use href="#xls"/></svg></button>
  <button class="t run multi" aria-label="Internet Explorer"><svg><use href="#ie"/></svg></button>
  <button class="t run" aria-label="Teamwork"><svg><use href="#ppl"/></svg></button>
  <div class="clock ms-auto align-self-center pe-1">4:00 PM<br>9/26/2019</div>
 </div>
</div>
</div>
<script src="https://cdn.jsdelivr.net/npm/bootstrap@5.3.0/dist/js/bootstrap.bundle.min.js"></script>
</body>
</html>
